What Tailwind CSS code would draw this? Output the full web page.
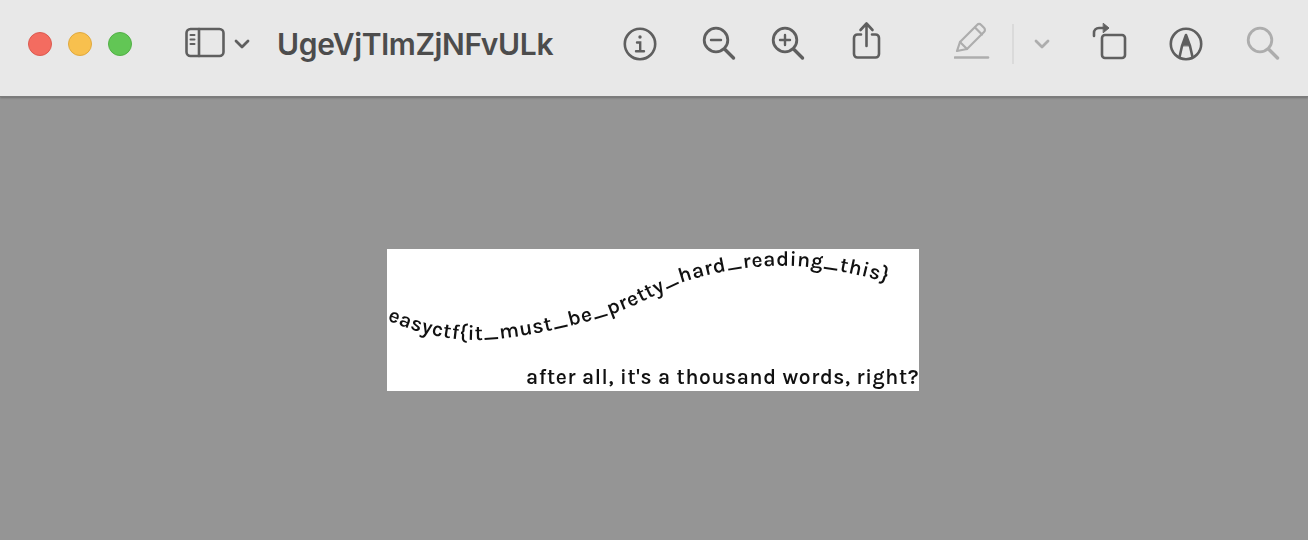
<!DOCTYPE html>
<html lang="en">
<head>
  <meta charset="UTF-8">
  <title>UgeVjTlmZjNFvULk</title>
  <script src="https://cdn.jsdelivr.net/npm/@tailwindcss/browser@4"></script>
</head>
<body class="w-[1308px] h-[540px] overflow-hidden bg-[#959595] font-['Inter','Liberation_Sans',sans-serif]">
  <!-- toolbar -->
  <header class="relative z-10 flex items-center h-[97px] pl-[28px] pb-[9px] bg-[#e8e8e8] border-b border-[#7c7c7c] shadow-[0_1px_2px_rgba(0,0,0,0.25)]">
    <div class="flex gap-[16px] shrink-0 mt-[1px]">
      <span class="w-[24px] h-[24px] rounded-full bg-[#f36c60] border border-[#dc5a50]"></span>
      <span class="w-[24px] h-[24px] rounded-full bg-[#f8c04e] border border-[#e0a93e]"></span>
      <span class="w-[24px] h-[24px] rounded-full bg-[#62c655] border border-[#52b046]"></span>
    </div>

    <!-- sidebar toggle -->
    <svg class="ml-[53px] mb-[2px] shrink-0" width="40" height="32" viewBox="0 0 40 32" fill="none" stroke="#5f5f5f" stroke-width="2.6" stroke-linecap="round">
      <rect x="1.500" y="2" width="37" height="27" rx="4"/>
      <path d="M14 2v27"/>
      <path d="M5.500 8h4M5.500 12.500h4M5.500 17h4" stroke-width="2"/>
    </svg>
    <svg class="ml-[9px] shrink-0" width="16" height="12" viewBox="0 0 16 12" fill="none" stroke="#5f5f5f" stroke-width="2.800" stroke-linecap="round" stroke-linejoin="round">
      <path d="M2 3l6 6 6-6"/>
    </svg>

    <h1 class="ml-[27px] w-[299px] shrink-0 text-[30px] leading-none font-semibold tracking-[-0.35px] text-[#4c4c4c]">UgeVjTlmZjNFvULk</h1>

    <!-- info -->
    <svg class="ml-[46px] shrink-0" width="36" height="36" viewBox="0 0 36 36" fill="none" stroke="#5f5f5f" stroke-width="2.600" stroke-linecap="round">
      <circle cx="18" cy="18" r="15.200"/>
      <circle cx="18" cy="11" r="1.700" fill="#5f5f5f" stroke="none"/>
      <path d="M15 16.500h3.200v8.500M14 25.200h8" stroke-width="2.400"/>
    </svg>
    <!-- zoom out -->
    <svg class="ml-[43px] shrink-0" width="36" height="36" viewBox="0 0 36 36" fill="none" stroke="#5f5f5f" stroke-width="2.800" stroke-linecap="round">
      <circle cx="15" cy="14" r="11.800"/>
      <path d="M10 14h10" stroke-width="2.400"/>
      <path d="M24 23.500l8.500 8.500" stroke-width="3.400"/>
    </svg>
    <!-- zoom in -->
    <svg class="ml-[33px] shrink-0" width="36" height="36" viewBox="0 0 36 36" fill="none" stroke="#5f5f5f" stroke-width="2.800" stroke-linecap="round">
      <circle cx="15" cy="14" r="11.800"/>
      <path d="M10 14h10M15 9v10" stroke-width="2.400"/>
      <path d="M24 23.500l8.500 8.500" stroke-width="3.400"/>
    </svg>
    <!-- share -->
    <svg class="ml-[46px] mb-[5px] shrink-0" width="31" height="40" viewBox="0 0 31 40" fill="none" stroke="#5f5f5f" stroke-width="2.600" stroke-linecap="round" stroke-linejoin="round">
      <path d="M9 13.500H5.500a3.500 3.500 0 0 0-3.500 3.500v16a3.500 3.500 0 0 0 3.500 3.500h18a3.500 3.500 0 0 0 3.500-3.500V17a3.500 3.500 0 0 0-3.500-3.500H20"/>
      <path d="M14.500 25V3M8.500 9l6-6.500 6 6.500"/>
    </svg>

    <!-- highlight pencil -->
    <svg class="ml-[71px] mb-[6px] shrink-0" width="36" height="38" viewBox="0 0 36 38" fill="none" stroke="#adadad" stroke-width="2.200" stroke-linecap="round" stroke-linejoin="round">
      <path d="M3 29l3-9L23 3c1.200-1.200 3-1.200 4.200 0l2.800 2.800c1.200 1.200 1.200 3 0 4.200L13 27z"/>
      <path d="M6 20l7 7M21 5.500l7 7"/>
      <path d="M1 35.500h33" stroke-width="2.600"/>
    </svg>
    <span class="ml-[22px] w-[2px] h-[40px] bg-[#dadada] shrink-0"></span>
    <svg class="ml-[20px] shrink-0" width="16" height="12" viewBox="0 0 16 12" fill="none" stroke="#adadad" stroke-width="2.800" stroke-linecap="round" stroke-linejoin="round">
      <path d="M2 3l6 6 6-6"/>
    </svg>

    <!-- rotate -->
    <svg class="ml-[42px] mb-[6px] shrink-0" width="36" height="38" viewBox="0 0 36 38" fill="none" stroke="#5f5f5f" stroke-width="2.600" stroke-linecap="round" stroke-linejoin="round">
      <rect x="10" y="13" width="23" height="23" rx="3"/>
      <path d="M2 14V11c0-3 2-5 5-5h6"/>
      <path d="M11.500 1.500L17 6l-5.500 4.500z" fill="#5f5f5f" stroke-width="1"/>
    </svg>
    <!-- markup -->
    <svg class="ml-[40px] shrink-0" width="36" height="36" viewBox="0 0 36 36" fill="none" stroke="#5f5f5f" stroke-width="2.600" stroke-linecap="round" stroke-linejoin="round">
      <circle cx="18" cy="18" r="15.200"/>
      <path d="M11.500 31l2.500-11 4-11 4 11 2.500 11"/>
      <path d="M14.500 19.500L18 9l3.500 10.500z" fill="#5f5f5f" stroke-width="1"/>
    </svg>
    <!-- search -->
    <svg class="ml-[41px] shrink-0" width="36" height="36" viewBox="0 0 36 36" fill="none" stroke="#adadad" stroke-width="2.800" stroke-linecap="round">
      <circle cx="15" cy="14" r="11.800"/>
      <path d="M24 23.500l8.500 8.500" stroke-width="3.400"/>
    </svg>
  </header>

  <!-- document -->
  <main class="flex items-center justify-center h-[443px] pt-[3px] pr-[2px]">
    <div class="w-[532px] h-[142px] shrink-0 bg-white overflow-hidden">
      <svg class="blur-[0.5px]" width="532" height="142" viewBox="0 0 532 142" font-family="Karla, 'Noto Sans', sans-serif" fill="#111111">
        <path id="curve" fill="none" d="M0 71 C35 86 70 94 110 90 C150 86 190 76 226 65 C255 54 275 42 296 33 C330 22 370 15 410 17 C440 19 470 24 515 38"/>
        <text font-size="21" font-weight="600" letter-spacing="0.55"><textPath href="#curve">easyctf{it_must_be_pretty_hard_reading_this}</textPath></text>
        <text x="139" y="135" font-size="21" font-weight="600" letter-spacing="0.64">after all, it's a thousand words, right?</text>
      </svg>
    </div>
  </main>
</body>
</html>
